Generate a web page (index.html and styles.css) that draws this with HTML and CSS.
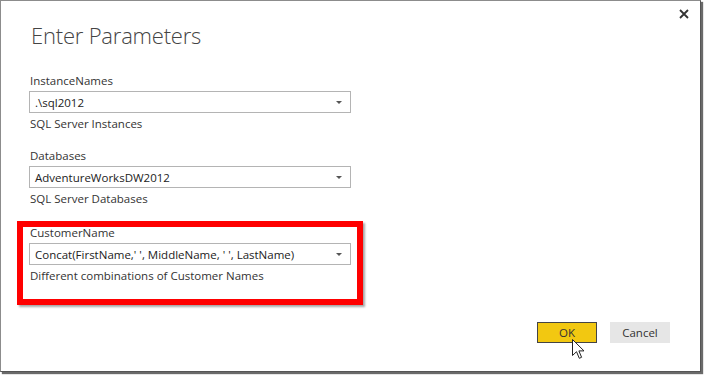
FILE: index.html
```html
<!DOCTYPE html>
<html>
<head>
<meta charset="utf-8">
<link rel="stylesheet" href="styles.css">
</head>
<body>
<div class="dialog">
  <div class="header">
    <h1 class="title">Enter Parameters</h1>
    <span class="close" aria-label="Close">
      <svg width="10" height="10" viewBox="0 0 10 10"><path d="M1 1L9 9M9 1L1 9" stroke="#333" stroke-width="1.8" fill="none"/></svg>
    </span>
  </div>
  <div class="form">
    <div class="field">
      <div class="label">InstanceNames</div>
      <div class="select"><span>.\sql2012</span><i class="arrow"></i></div>
      <div class="help">SQL Server Instances</div>
    </div>
    <div class="field">
      <div class="label">Databases</div>
      <div class="select"><span>AdventureWorksDW2012</span><i class="arrow"></i></div>
      <div class="help">SQL Server Databases</div>
    </div>
    <div class="field">
      <div class="label">CustomerName</div>
      <div class="select"><span>Concat(FirstName,' ', MiddleName, ' ', LastName)</span><i class="arrow"></i></div>
      <div class="help">Different combinations of Customer Names</div>
    </div>
    <div class="highlight"></div>
  </div>
  <div class="footer">
    <div class="btn ok">OK
      <svg class="cursor" width="13" height="21" viewBox="0 0 13 21"><path d="M0.5 0.5V16.5L4.5 12.7L7.3 19.3L9.6 18.3L6.9 11.9H12Z" fill="#fff" stroke="#222" stroke-width="1" stroke-linejoin="round"/></svg>
    </div>
    <div class="btn cancel">Cancel</div>
  </div>
</div>
</body>
</html>
```
FILE: styles.css
```css
html, body {
  margin: 0;
  padding: 0;
  background: #fff;
}
body {
  width: 705px;
  height: 378px;
  overflow: hidden;
  font-family: "Segoe UI", "Open Sans", "Noto Sans", sans-serif;
  color: #333;
}
.dialog {
  box-sizing: border-box;
  width: 701px;
  height: 372px;
  border: 1px solid #8c8c8c;
  border-right-color: #555;
  border-bottom-color: #555;
  box-shadow: 2px 2px 1px #6a6a6a;
  background: #fff;
  display: flex;
  flex-direction: column;
  position: relative;
}
.header {
  display: flex;
  justify-content: space-between;
  align-items: flex-start;
  padding: 18px 11px 0 30px;
}
.title {
  margin: 0;
  font-size: 22px;
  font-weight: 300;
  line-height: 32px;
  color: #444;
  letter-spacing: -0.2px;
}
.close {
  display: block;
  width: 10px;
  height: 10px;
  margin-top: -10px;
}
.close svg { display: block; }
.form {
  position: relative;
  padding: 22px 0 0 28px;
  display: flex;
  flex-direction: column;
  gap: 16px;
}
.field {
  display: flex;
  flex-direction: column;
}
.field + .field + .field {
  margin-top: 2px;
}
.label, .help {
  font-size: 11.5px;
  line-height: 16px;
  padding-left: 1px;
  color: #333;
}
.select {
  box-sizing: border-box;
  width: 322px;
  height: 22px;
  margin: 2px 0 3px;
  border: 1px solid #b4b4b4;
  display: flex;
  align-items: center;
  justify-content: space-between;
  padding: 0 8px 0 5px;
  font-size: 11.5px;
  color: #222;
}
.arrow {
  width: 0;
  height: 0;
  border-left: 3px solid transparent;
  border-right: 3px solid transparent;
  border-top: 3px solid #555;
}
.highlight {
  position: absolute;
  left: 16px;
  top: 170px;
  width: 334px;
  height: 72px;
  border: 6px solid #ff0000;
  box-shadow: 2px 2px 2px rgba(0,0,0,0.35);
  pointer-events: none;
}
.footer {
  margin-top: auto;
  display: flex;
  justify-content: flex-end;
  gap: 13px;
  padding: 0 30px 28px 0;
}
.btn {
  box-sizing: border-box;
  width: 60px;
  height: 21px;
  display: flex;
  align-items: center;
  justify-content: center;
  font-size: 11.5px;
  color: #333;
  position: relative;
}
.ok {
  background: #f2c811;
  border: 1px solid #444;
}
.cancel {
  background: #e6e6e6;
}
.cursor {
  position: absolute;
  left: 34px;
  top: 16px;
}
```
